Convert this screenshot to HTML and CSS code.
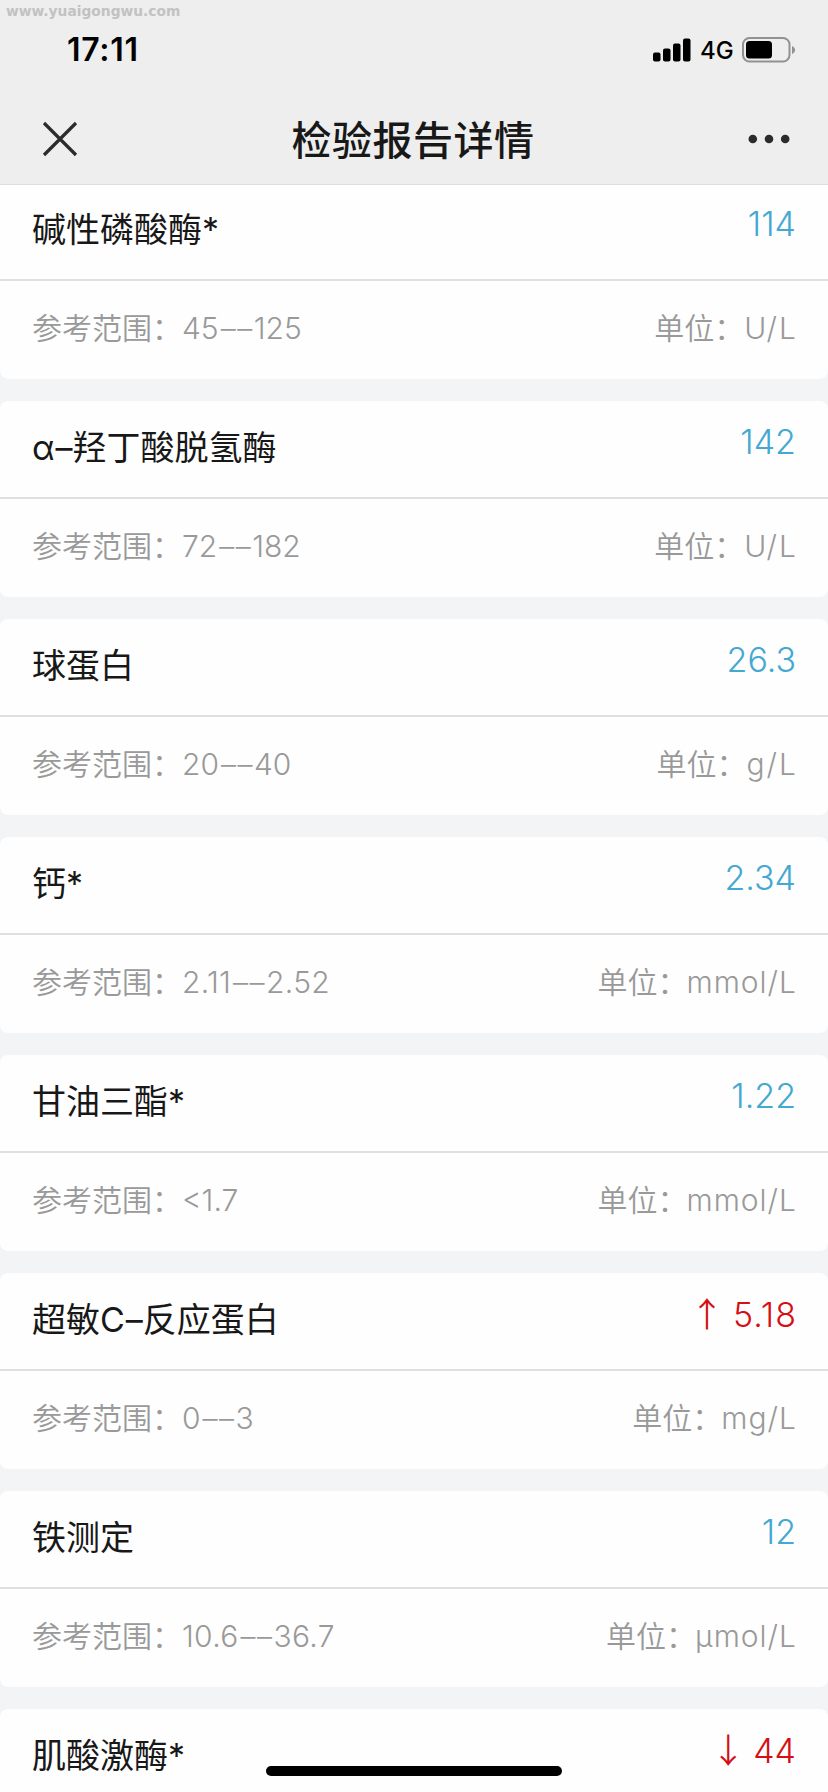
FILE: index.html
```html
<!DOCTYPE html>
<html lang="zh-CN">
<head>
<meta charset="utf-8">
<title>检验报告详情</title>
<link rel="stylesheet" href="styles.css">
</head>
<body>
<div class="screen">
  <header class="header">
    <span class="watermark">www.yuaigongwu.com</span>
    <div class="status">
      <span class="time">17:11</span>
      <div class="indicators">
        <svg class="signal" width="38" height="24" viewBox="0 0 38 24"><rect x="0" y="14.500" width="7.500" height="9" rx="2"/><rect x="10" y="10.500" width="7.500" height="13" rx="2"/><rect x="20" y="5.500" width="7.500" height="18" rx="2"/><rect x="30" y="0.500" width="7.500" height="23" rx="2"/></svg>
        <span class="network">4G</span>
        <svg class="battery" width="54" height="26" viewBox="0 0 54 26"><rect x="1" y="1" width="46.500" height="23.500" rx="6.500" fill="none" stroke="#919194" stroke-width="2"/><rect x="4" y="4" width="26" height="17.500" rx="3.500" fill="#000"/><path d="M50 9c4 1.500 4 6.500 0 8z" fill="#919194"/></svg>
      </div>
    </div>
    <nav class="nav">
      <svg class="close" width="36" height="36" viewBox="0 0 36 36"><path d="M2 2L34 34M34 2L2 34" stroke="#2b2b2b" stroke-width="3.200" fill="none"/></svg>
      <h1 class="title">检验报告详情</h1>
      <svg class="more" width="42" height="10" viewBox="0 0 42 10"><circle cx="4.800" cy="5" r="4.300"/><circle cx="21" cy="5" r="4.300"/><circle cx="37.200" cy="5" r="4.300"/></svg>
    </nav>
  </header>
  <main class="list">
    <section class="card first"><div class="row main"><span class="name">碱性磷酸酶*</span><span class="value">114</span></div><div class="row meta"><span>参考范围：<span class="num">45<span class="dash">––</span>125</span></span><span>单位：<span class="unit short">U/L</span></span></div></section>
    <section class="card"><div class="row main"><span class="name">α<span class="dash">–</span>羟丁酸脱氢酶</span><span class="value">142</span></div><div class="row meta"><span>参考范围：<span class="num">72<span class="dash">––</span>182</span></span><span>单位：<span class="unit short">U/L</span></span></div></section>
    <section class="card"><div class="row main"><span class="name">球蛋白</span><span class="value">26.3</span></div><div class="row meta"><span>参考范围：<span class="num">20<span class="dash">––</span>40</span></span><span>单位：<span class="unit short">g/L</span></span></div></section>
    <section class="card"><div class="row main"><span class="name">钙*</span><span class="value">2.34</span></div><div class="row meta"><span>参考范围：<span class="num decimal">2.11<span class="dash">––</span>2.52</span></span><span>单位：<span class="unit">mmol/L</span></span></div></section>
    <section class="card"><div class="row main"><span class="name">甘油三酯*</span><span class="value">1.22</span></div><div class="row meta"><span>参考范围：<span class="num">&lt;1.7</span></span><span>单位：<span class="unit">mmol/L</span></span></div></section>
    <section class="card"><div class="row main"><span class="name">超敏C<span class="dash">–</span>反应蛋白</span><span class="value abnormal high"><span class="arrow">↑</span>5.18</span></div><div class="row meta"><span>参考范围：<span class="num">0<span class="dash">––</span>3</span></span><span>单位：<span class="unit">mg/L</span></span></div></section>
    <section class="card"><div class="row main"><span class="name">铁测定</span><span class="value">12</span></div><div class="row meta"><span>参考范围：<span class="num decimal">10.6<span class="dash">––</span>36.7</span></span><span>单位：<span class="unit">μmol/L</span></span></div></section>
    <section class="card last"><div class="row main"><span class="name">肌酸激酶*</span><span class="value abnormal"><span class="arrow">↓</span>44</span></div></section>
  </main>
  <div class="home-indicator"></div>
</div>
</body>
</html>
```

FILE: styles.css
```css
* { box-sizing: border-box; }
body { margin: 0; background: #f2f4f6; font-family: Inter, "Noto Sans CJK SC", sans-serif; }
.screen { position: relative; width: 828px; height: 1792px; overflow: hidden; background: #f2f4f6; }
.header { position: relative; height: 185px; background: #eeeeee; border-bottom: 1px solid #dedede; }
.watermark { position: absolute; left: 6px; top: 1px; font: 900 13.800px/20px "DejaVu Sans", sans-serif; color: #c2c2c2; }
.status { display: flex; justify-content: space-between; height: 100px; padding: 0 32px 0 67px; align-items: center; }
.time { font-size: 32px; font-weight: 600; line-height: 40px; letter-spacing: 0.700px; color: #000; }
.indicators { display: flex; align-items: center; }
.network { margin-left: 9px; width: 42px; font-size: 24px; font-weight: 500; line-height: 30px; margin-top: 2px; }
.battery { display: block; }
.nav { display: flex; align-items: center; justify-content: space-between; height: 78px; padding: 0 38px 0 42px; }
.title { margin: 4px 0 0; font-size: 40px; font-weight: 500; line-height: 60px; color: #181818; letter-spacing: 0.500px; }
.more { fill: #2b2b2b; }
.list { display: flex; flex-direction: column; gap: 22px; margin-top: -2px; }
.card { flex: none; height: 196px; background: #fefefe; border-radius: 8px; }
.first { border-top: 2px solid transparent; background-clip: padding-box; border-radius: 0 0 8px 8px; }
.row { display: flex; justify-content: space-between; padding: 0 32px; white-space: nowrap; }
.main { height: 98px; border-bottom: 2px solid #e0e0e0; }
.first .main { height: 96px; }
.name { margin-top: 22px; font-size: 34px; line-height: 50px; color: #181818; font-weight: 400; }
.name .dash { margin-left: 1px; }
.value { margin-top: 16px; font-size: 34px; font-weight: 350; line-height: 50px; color: #43a9d1; }
.first .name { margin-top: 20px; }
.first .value { margin-top: 14px; }
.abnormal { margin-top: 15px; color: #d50f14; }
.arrow { font-family: "Noto Sans CJK SC", sans-serif; margin-right: 8px; }
.high { letter-spacing: 1px; margin-right: -1px; }
.meta { padding-top: 25px; font-size: 30px; line-height: 44px; color: #999999; font-weight: 350; }
.meta .dash { margin-left: 2px; letter-spacing: 1.500px; }
.decimal { letter-spacing: 0.300px; }
.unit { margin-left: -1px; letter-spacing: 1px; margin-right: -1px; }
.short { margin-left: 0; letter-spacing: 2px; margin-right: -2px; }
.home-indicator { position: absolute; left: 266px; top: 1766px; width: 296px; height: 10px; border-radius: 5px; background: #000; }
```
